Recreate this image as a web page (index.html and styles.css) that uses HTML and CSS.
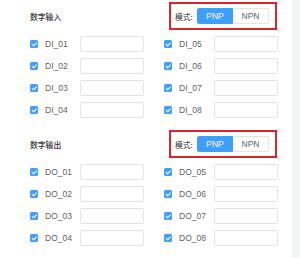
FILE: index.html
```html
<!DOCTYPE html>
<html lang="zh">
<head>
    <meta charset="UTF-8">
    <meta name="viewport" content="width=device-width, initial-scale=1.0">
    <title>数字输入输出</title>
    <link rel="stylesheet" href="styles.css">
</head>
<body>
    <div class="page">
        <div class="panel">
            <div class="section">
                <div class="section-head">
                    <span class="section-title">数字输入</span>
                    <div class="mode-box">
                        <span class="mode-label">模式:</span>
                        <div class="seg">
                            <span class="seg-item active">PNP</span>
                            <span class="seg-item">NPN</span>
                        </div>
                    </div>
                </div>
                <div class="io-grid">
                    <div class="io-row"><span class="check"></span><span class="io-name">DI_01</span><input class="io-input" type="text"></div>
                    <div class="io-row"><span class="check"></span><span class="io-name">DI_05</span><input class="io-input" type="text"></div>
                    <div class="io-row"><span class="check"></span><span class="io-name">DI_02</span><input class="io-input" type="text"></div>
                    <div class="io-row"><span class="check"></span><span class="io-name">DI_06</span><input class="io-input" type="text"></div>
                    <div class="io-row"><span class="check"></span><span class="io-name">DI_03</span><input class="io-input" type="text"></div>
                    <div class="io-row"><span class="check"></span><span class="io-name">DI_07</span><input class="io-input" type="text"></div>
                    <div class="io-row"><span class="check"></span><span class="io-name">DI_04</span><input class="io-input" type="text"></div>
                    <div class="io-row"><span class="check"></span><span class="io-name">DI_08</span><input class="io-input" type="text"></div>
                </div>
            </div>
            <div class="section">
                <div class="section-head">
                    <span class="section-title">数字输出</span>
                    <div class="mode-box">
                        <span class="mode-label">模式:</span>
                        <div class="seg">
                            <span class="seg-item active">PNP</span>
                            <span class="seg-item">NPN</span>
                        </div>
                    </div>
                </div>
                <div class="io-grid">
                    <div class="io-row"><span class="check"></span><span class="io-name">DO_01</span><input class="io-input" type="text"></div>
                    <div class="io-row"><span class="check"></span><span class="io-name">DO_05</span><input class="io-input" type="text"></div>
                    <div class="io-row"><span class="check"></span><span class="io-name">DO_02</span><input class="io-input" type="text"></div>
                    <div class="io-row"><span class="check"></span><span class="io-name">DO_06</span><input class="io-input" type="text"></div>
                    <div class="io-row"><span class="check"></span><span class="io-name">DO_03</span><input class="io-input" type="text"></div>
                    <div class="io-row"><span class="check"></span><span class="io-name">DO_07</span><input class="io-input" type="text"></div>
                    <div class="io-row"><span class="check"></span><span class="io-name">DO_04</span><input class="io-input" type="text"></div>
                    <div class="io-row"><span class="check"></span><span class="io-name">DO_08</span><input class="io-input" type="text"></div>
                </div>
            </div>
        </div>
        <div class="side"></div>
    </div>
</body>
</html>
```

FILE: styles.css
```css
html, body {
    margin: 0;
    padding: 0;
}
body {
    font-family: "Liberation Sans", "Noto Sans CJK SC", sans-serif;
    background-color: #fff;
}
.page {
    display: flex;
    width: 300px;
    height: 258px;
    overflow: hidden;
}
.panel {
    width: 262px;
    padding: 2px 0 0 30px;
    background-color: #fff;
}
.side {
    flex: 1;
    background-color: #f4f5f7;
}
.section {
    width: 248px;
    margin-bottom: 12px;
}
.section-head {
    display: flex;
    justify-content: space-between;
    align-items: center;
    height: 28px;
    padding-right: 1px;
}
.section-title {
    font-family: "Noto Sans CJK SC", sans-serif;
    font-size: 7.8px;
    font-weight: 500;
    color: #303133;
}
.mode-box {
    display: flex;
    align-items: center;
    box-sizing: border-box;
    width: 108px;
    height: 28px;
    padding: 0 5px 0 4px;
    border: 2px solid #d9262c;
}
.mode-label {
    font-family: "Noto Sans CJK SC", sans-serif;
    font-size: 7.8px;
    color: #303133;
    width: 22px;
}
.seg {
    display: flex;
    height: 16px;
}
.seg-item {
    box-sizing: border-box;
    width: 36px;
    display: flex;
    justify-content: center;
    align-items: center;
    font-size: 8.5px;
    color: #606266;
    border: 1px solid #e2e4ea;
}
.seg-item:first-child {
    border-radius: 2px 0 0 2px;
}
.seg-item:last-child {
    border-left: none;
    border-radius: 0 2px 2px 0;
}
.seg-item.active {
    background-color: #409eff;
    border-color: #409eff;
    color: #fff;
}
.io-grid {
    display: grid;
    grid-template-columns: 114px 114px;
    column-gap: 20px;
    row-gap: 6px;
    margin-top: 6px;
}
.io-row {
    display: flex;
    align-items: center;
    height: 16px;
}
.check {
    position: relative;
    width: 8px;
    height: 8px;
    border-radius: 1.5px;
    background-color: #409eff;
    margin-right: 7px;
    flex: none;
}
.check::after {
    content: "";
    position: absolute;
    left: 2.6px;
    top: 1px;
    width: 1.6px;
    height: 3.6px;
    border: solid #fff;
    border-width: 0 1.1px 1.1px 0;
    transform: rotate(45deg);
}
.io-name {
    width: 35px;
    font-size: 8.5px;
    color: #606266;
}
.io-input {
    box-sizing: border-box;
    width: 64px;
    height: 16px;
    margin: 0;
    padding: 0 4px;
    border: 1px solid #e0e3e8;
    border-radius: 2px;
    background: #fff;
    outline: none;
}
```
